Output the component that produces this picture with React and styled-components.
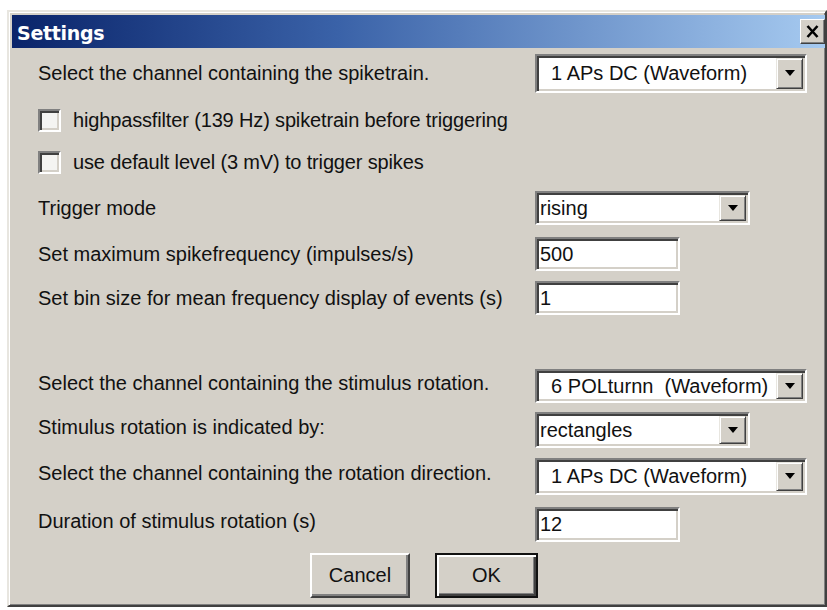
import React from "react";
import styled, { createGlobalStyle } from "styled-components";

const GlobalStyle = createGlobalStyle`
  html, body {
    margin: 0;
    padding: 0;
    background: #fff;
  }
  body {
    font-family: "Liberation Sans", Arial, sans-serif;
  }
`;

const Window = styled.div`
  box-sizing: border-box;
  margin: 10px 0 0 7px;
  width: 820px;
  height: 597px;
  background: #d4d0c8;
  border: 2px solid;
  border-color: #e8e6e0 #404040 #404040 #e8e6e0;
  box-shadow: inset 1px 1px 0 #fff, inset -1px -1px 0 #808080;
  padding: 3px 0 0 3px;
  display: flex;
  flex-direction: column;
`;

const TitleBar = styled.div`
  height: 33px;
  display: flex;
  align-items: center;
  justify-content: space-between;
  padding-left: 5px;
  background: linear-gradient(to right, #0a246a 0%, #3a62a8 40%, #a6caf0 100%);
`;

const Title = styled.span`
  font-family: "DejaVu Sans", Verdana, sans-serif;
  font-weight: bold;
  font-size: 19px;
  color: #fff;
  padding-top: 3px;
  letter-spacing: -0.3px;
`;

const CloseButton = styled.div`
  box-sizing: border-box;
  width: 25px;
  height: 25px;
  display: flex;
  align-items: center;
  justify-content: center;
  background: #d4d0c8;
  border: 1px solid;
  border-color: #fff #404040 #404040 #fff;
  box-shadow: inset -1px -1px 0 #808080;
`;

const Form = styled.div`
  display: flex;
  flex-direction: column;
  padding: 2px 0 0 26px;
`;

const Row = styled.div`
  display: flex;
  align-items: center;
  height: ${(p) => p.$h}px;
`;

const Label = styled.span`
  width: 497px;
  font-size: 20px;
  color: #111;
  white-space: nowrap;
  padding-bottom: ${(p) => (p.$lift ? 6 : 0)}px;
`;

const CheckRow = styled.label`
  display: flex;
  align-items: center;
  gap: 12px;
  font-size: 20px;
  color: #111;
  white-space: nowrap;
  letter-spacing: -0.15px;
`;

const CheckBox = styled.span`
  box-sizing: border-box;
  width: 23px;
  height: 23px;
  background: #f4f4f2;
  border: 2px solid;
  border-color: #808080 #fff #fff #808080;
  box-shadow: inset 2px 2px 0 #404040, inset -2px -2px 0 #d4d0c8;
`;

const Sunken = styled.div`
  box-sizing: border-box;
  background: #fff;
  border: 2px solid;
  border-color: #808080 #fff #fff #808080;
  box-shadow: inset 2px 2px 0 #404040, inset -2px -2px 0 #d4d0c8;
`;

const Combo = styled(Sunken)`
  display: flex;
  align-items: stretch;
  width: ${(p) => (p.$wide ? 272 : 215)}px;
  height: ${(p) => p.$h || 36}px;
  padding: 2px;
`;

const ComboValue = styled.span`
  flex: 1;
  display: flex;
  align-items: center;
  padding-left: 1px;
  font-size: 20px;
  color: #111;
  white-space: pre;
`;

const DropButton = styled.span`
  box-sizing: border-box;
  width: 27px;
  display: flex;
  align-items: center;
  justify-content: center;
  background: #d4d0c8;
  border: 1px solid;
  border-color: #e8e6e0 #404040 #404040 #e8e6e0;
  box-shadow: inset 1px 1px 0 #fff, inset -1px -1px 0 #808080;
`;

const TextField = styled(Sunken)`
  width: 145px;
  height: ${(p) => p.$h || 34}px;
  display: flex;
  align-items: center;
  padding-left: 3px;
  font-size: 20px;
  color: #111;
`;

const ButtonBar = styled.div`
  display: flex;
  align-items: center;
  gap: 25px;
  height: 54px;
  padding-left: 272px;
`;

const PushButton = styled.button`
  box-sizing: border-box;
  width: ${(p) => (p.$default ? 103 : 100)}px;
  height: 45px;
  font-family: "Liberation Sans", Arial, sans-serif;
  font-size: 20px;
  color: #111;
  background: #d4d0c8;
  border: 2px solid;
  border-color: ${(p) =>
    p.$default ? "#111 #111 #111 #111" : "#fff #404040 #404040 #fff"};
  box-shadow: ${(p) =>
    p.$default
      ? "inset 2px 2px 0 #fff, inset -2px -2px 0 #404040, inset -3px -3px 0 #808080"
      : "inset -2px -2px 0 #808080"};
  padding: 0;
`;

const Arrow = () => (
  <svg width="10" height="6" viewBox="0 0 10 6">
    <polygon points="0,0 10,0 5,6" fill="#000" />
  </svg>
);

const CloseGlyph = () => (
  <svg width="13" height="13" viewBox="0 0 13 13">
    <path d="M1.5 1 L11.5 12 M11.5 1 L1.5 12" stroke="#000" strokeWidth="2.6" />
  </svg>
);

const Select = ({ value, wide, h }) => (
  <Combo $wide={wide} $h={h}>
    <ComboValue>{value}</ComboValue>
    <DropButton>
      <Arrow />
    </DropButton>
  </Combo>
);

export default function App() {
  return (
    <>
      <GlobalStyle />
      <Window>
        <TitleBar>
          <Title>Settings</Title>
          <CloseButton>
            <CloseGlyph />
          </CloseButton>
        </TitleBar>

        <Form>
          <Row $h={46}>
            <Label>Select the channel containing the spiketrain.</Label>
            <Select wide h={39} value="  1 APs DC (Waveform)" />
          </Row>

          <Row $h={48}>
            <CheckRow>
              <CheckBox />
              highpassfilter (139 Hz) spiketrain before triggering
            </CheckRow>
          </Row>
          <Row $h={36}>
            <CheckRow>
              <CheckBox />
              use default level (3 mV) to trigger spikes
            </CheckRow>
          </Row>

          <Row $h={56}>
            <Label>Trigger mode</Label>
            <Select h={34} value="rising" />
          </Row>
          <Row $h={36}>
            <Label>Set maximum spikefrequency (impulses/s)</Label>
            <TextField>500</TextField>
          </Row>
          <Row $h={52}>
            <Label>Set bin size for mean frequency display of events (s)</Label>
            <TextField>1</TextField>
          </Row>

          <Row $h={40} />

          <Row $h={44}>
            <Label $lift>Select the channel containing the stimulus rotation.</Label>
            <Select wide h={34} value="  6 POLturnn  (Waveform)" />
          </Row>
          <Row $h={44}>
            <Label $lift>Stimulus rotation is indicated by:</Label>
            <Select h={36} value="rectangles" />
          </Row>
          <Row $h={48}>
            <Label $lift>Select the channel containing the rotation direction.</Label>
            <Select wide h={37} value="  1 APs DC (Waveform)" />
          </Row>
          <Row $h={48}>
            <Label $lift>Duration of stimulus rotation (s)</Label>
            <TextField $h={35}>12</TextField>
          </Row>

          <ButtonBar>
            <PushButton>Cancel</PushButton>
            <PushButton $default>OK</PushButton>
          </ButtonBar>
        </Form>
      </Window>
    </>
  );
}
